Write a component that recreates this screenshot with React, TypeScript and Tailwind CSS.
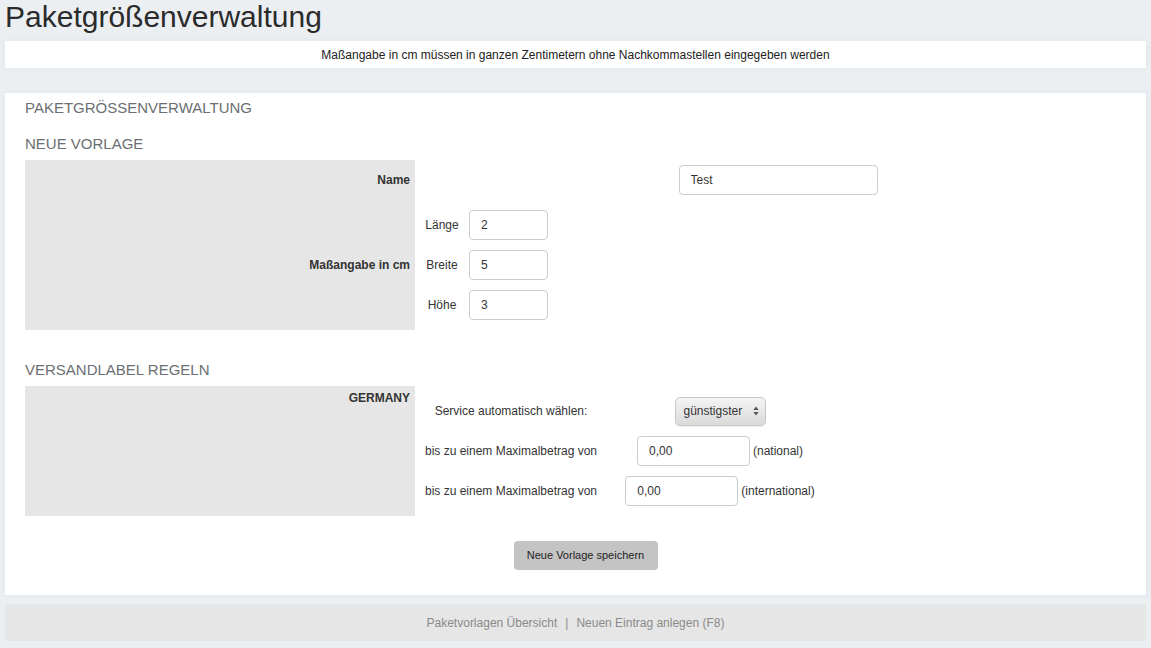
import React from 'react';

const inputCls =
  'h-[30px] rounded-[4px] border border-[#cccccc] bg-white pl-[11px] text-[12px] text-[#333] outline-none';

const SectionTitle = ({ children }: { children: React.ReactNode }) => (
  <h2 className="h-[18px] text-[15px] leading-[18px] text-[#6b6f73]">{children}</h2>
);

const DimRow = ({ label, value }: { label: string; value: string }) => (
  <div className="flex h-[40px] items-center">
    <span className="w-[54px] text-center">{label}</span>
    <input className={`${inputCls} w-[79px]`} defaultValue={value} readOnly />
  </div>
);

const App = () => {
  return (
    <div
      className="min-h-[648px] bg-[#eceff2] text-[12px] text-[#222]"
      style={{ fontFamily: '"Liberation Sans", Arial, Helvetica, sans-serif' }}
    >
      <h1 className="h-[41px] pl-[5px] text-[30px] leading-[34px] text-[#2b2b2b]">Paketgrößenverwaltung</h1>

      <div className="mx-[5px] flex h-[27px] items-center justify-center bg-white shadow-[0_0_8px_rgba(0,0,0,0.05)]">
        Maßangabe in cm müssen in ganzen Zentimetern ohne Nachkommastellen eingegeben werden
      </div>

      <div className="mx-[5px] mt-[25px] bg-white pb-[25px] pl-[20px] pr-[5px] pt-[6px] shadow-[0_0_8px_rgba(0,0,0,0.05)]">
        <SectionTitle>PAKETGRÖSSENVERWALTUNG</SectionTitle>
        <div className="mt-[18px]">
          <SectionTitle>NEUE VORLAGE</SectionTitle>
        </div>

        <div className="mt-[7px] flex">
          <div className="w-[390px] bg-[#e6e6e6] font-bold text-[#333]">
            <div className="flex h-[40px] items-center justify-end pr-[5px]">Name</div>
            <div className="flex h-[130px] items-center justify-end pr-[5px]">Maßangabe in cm</div>
          </div>
          <div className="flex-1 text-[#333]">
            <div className="flex h-[40px] items-center justify-center">
              <input className={`${inputCls} h-[29px] w-[199px]`} defaultValue="Test" readOnly />
            </div>
            <div className="flex h-[130px] flex-col justify-center">
              <DimRow label="Länge" value="2" />
              <DimRow label="Breite" value="5" />
              <DimRow label="Höhe" value="3" />
            </div>
          </div>
        </div>

        <div className="mt-[31px]">
          <SectionTitle>VERSANDLABEL REGELN</SectionTitle>
        </div>

        <div className="mt-[7px] flex">
          <div className="h-[130px] w-[390px] bg-[#e6e6e6] pr-[5px] pt-[5px] text-right font-bold leading-[14px] text-[#333]">
            GERMANY
          </div>
          <div className="pt-[5px] text-[#333]">
            <div className="flex h-[40px] items-center">
              <span className="w-[192px] text-center">Service automatisch wählen:</span>
              <div className="flex w-[226px] justify-center">
                <div className="flex h-[29px] w-[91px] items-center justify-between rounded-[5px] border border-[#c8c8c8] bg-gradient-to-b from-[#f4f4f4] to-[#dadada] pl-[8px] pr-[6px] shadow-[0_1px_1px_rgba(0,0,0,0.08)]">
                  <span>günstigster</span>
                  <svg width="6" height="10" viewBox="0 0 6 10" className="fill-[#555]">
                    <path d="M3 0.5 L5.6 4 H0.4 Z" />
                    <path d="M3 9.5 L5.6 6 H0.4 Z" />
                  </svg>
                </div>
              </div>
            </div>
            <div className="flex h-[40px] items-center">
              <span className="w-[192px] text-center">bis zu einem Maximalbetrag von</span>
              <div className="flex w-[226px] items-center justify-center gap-[3px]">
                <input className={`${inputCls} w-[113px]`} defaultValue="0,00" readOnly />
                <span>(national)</span>
              </div>
            </div>
            <div className="flex h-[40px] items-center">
              <span className="w-[192px] text-center">bis zu einem Maximalbetrag von</span>
              <div className="flex w-[226px] items-center justify-center gap-[3px]">
                <input className={`${inputCls} w-[113px]`} defaultValue="0,00" readOnly />
                <span>(international)</span>
              </div>
            </div>
          </div>
        </div>

        <div className="mt-[25px] flex justify-center pl-[5px]">
          <button className="h-[29px] w-[144px] rounded-[4px] bg-[#c4c4c4] text-[11px] text-[#222]">
            Neue Vorlage speichern
          </button>
        </div>
      </div>

      <div className="mx-[5px] mt-[9px] flex h-[37px] items-center justify-center bg-[#e6e6e6] text-[#8a8a8a]">
        <span>Paketvorlagen Übersicht</span>
        <span className="mx-[8px] text-[#8a8a8a]">|</span>
        <span>Neuen Eintrag anlegen (F8)</span>
      </div>
    </div>
  );
};

export default App;
